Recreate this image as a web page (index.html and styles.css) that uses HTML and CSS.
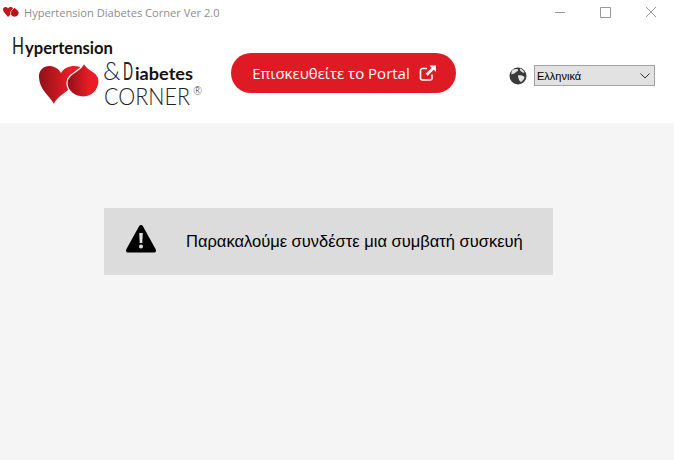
FILE: index.html
```html
<!DOCTYPE html>
<html>
<head>
    <meta charset="utf-8">
    <title>Hypertension Diabetes Corner Ver 2.0</title>
    <link rel="stylesheet" href="styles.css">
</head>

<body>
    <div class="titlebar">
        <svg class="app-icon" width="16" height="10" viewBox="0 0 16 10">
            <path d="M5 10C3 7 0 5 0 2.500 0 1 1 0 2.500 0 3.500 0 4.500.5 5 1.500 5.800.5 6.500 0 7.500 0 8.500 0 9.500.5 10 1L9 6z" fill="#c4161c"/>
            <path d="M11.500 0C11 2 7.500 3 7.500 6c0 2.500 2 4 4 4 2.500 0 4.500-2 4.500-4.500C16 3 12 2 11.500 0z" fill="#b5141b" stroke="#fff" stroke-width=".7"/>
        </svg>
        <span class="app-title">Hypertension Diabetes Corner Ver 2.0</span>
        <div class="window-controls">
            <svg class="win-btn" width="46" height="24" viewBox="0 0 46 24"><path d="M19 12.500h10" stroke="#999" fill="none"/></svg>
            <svg class="win-btn" width="46" height="24" viewBox="0 0 46 24"><path d="M18.500 7.500h10v10h-10z" stroke="#999" fill="none"/></svg>
            <svg class="win-btn" width="46" height="24" viewBox="0 0 46 24"><path d="M18 7l10 10M28 7L18 17" stroke="#999" fill="none"/></svg>
        </div>
    </div>

    <div class="header">
        <svg class="logo" width="200" height="82" viewBox="0 0 200 82">
            <defs>
                <linearGradient id="red" x1="0" x2="1" y1="0" y2="0">
                    <stop offset="0" stop-color="#8f1117"/>
                    <stop offset="0.7" stop-color="#ea1c26"/>
                </linearGradient>
            </defs>
            <text x="4" y="24" class="logo-cap" font-size="24" textLength="12" lengthAdjust="spacingAndGlyphs">H</text>
            <text x="17" y="24" class="logo-bold" font-size="17" textLength="88" lengthAdjust="spacingAndGlyphs">ypertension</text>
            <path d="M46 74C42 66 31 60 31 46c0-6 5-10 10-10 5 0 9 2 12 7 3-5 8-7 13-7 4 0 7 1 9 3L60 60c-8 6-13 10-14 14z" fill="url(#red)"/>
            <path d="M76 33c-2 6-10 9-14 13-2 2-3 4-3 7 0 8 8 14 16 14 9 0 16-7 16-16 0-7-7-10-11-13-2-2-3-3-4-5z" fill="url(#red)" stroke="#fff" stroke-width="1.200"/>
            <text x="95" y="50" class="logo-thin" font-size="25">&amp;</text>
            <text x="115" y="50" class="logo-cap" font-size="25" textLength="10" lengthAdjust="spacingAndGlyphs">D</text>
            <text x="127" y="50" class="logo-bold" font-size="17" textLength="58" lengthAdjust="spacingAndGlyphs">iabetes</text>
            <text x="96" y="75" class="logo-thin" font-size="24" textLength="86" lengthAdjust="spacingAndGlyphs">CORNER</text>
            <text x="185" y="65" class="logo-thin" font-size="11">®</text>
        </svg>

        <button type="button" class="portal-button">
            <span>Επισκευθείτε το Portal</span>
            <svg width="18" height="16" viewBox="0 0 18 16">
                <path d="M8 3.500H3.500a2 2 0 0 0-2 2V13a2 2 0 0 0 2 2H11a2 2 0 0 0 2-2V9.500" fill="none" stroke="#fff" stroke-width="1.600"/>
                <path d="M10.500 0.500H17V7l-2.300-2.300-6 6-2-2 6-6z" fill="#fff"/>
            </svg>
        </button>

        <div class="language">
            <svg width="18" height="18" viewBox="0 0 18 18">
                <circle cx="9" cy="9" r="8.500" fill="#3a3a3a"/>
                <path d="M4 2.500c2-.5 4-.8 5 0 .5 1.500-1.500 2-2.500 3-1 1.500-3 1-4 2C2 5.500 2.800 3.500 4 2.500zM11 1.500c2 .5 3.500 2 4.500 4-1.500.5-3-.5-4-1.500-.5-1-.8-1.700-.5-2.500zM9 8.500c2-.5 5 0 6.500 1.500-.5 2.500-2 4-3.500 5-1.500-1-2.500-2.500-2.500-4-.5-1-.5-1.800-.5-2.500z" fill="#e4e4e4"/>
            </svg>
            <div class="select-box">
                <span>Ελληνικά</span>
                <svg width="10" height="6" viewBox="0 0 10 6"><path d="M.5.500L5 5 9.500.5" fill="none" stroke="#333"/></svg>
            </div>
        </div>
    </div>

    <div class="main">
        <div class="alert">
            <svg class="alert-icon" width="32" height="28" viewBox="0 0 32 28">
                <path d="M16 0c.8 0 1.400.4 1.800 1.100l13 23.500c.7 1.300-.1 2.900-1.500 2.900H2.700c-1.400 0-2.200-1.600-1.500-2.900l13-23.500C14.600.4 15.200 0 16 0z" fill="#000"/>
                <path d="M14.200 8h3.600l-.5 10h-2.600z" fill="#dcdcdc"/>
                <circle cx="16" cy="21.500" r="2" fill="#dcdcdc"/>
            </svg>
            <span>Παρακαλούμε συνδέστε μια συμβατή συσκευή</span>
        </div>
    </div>
</body>
</html>
```

FILE: styles.css
```css
html, body {
    height: 100%;
}
body {
    font-family: "Open Sans", sans-serif;
    display: flex;
    flex-direction: column;
    margin: 0;
    background-color: #f5f5f5;
    overflow: hidden;
}
.titlebar {
    display: flex;
    align-items: center;
    height: 24px;
    padding-left: 3px;
    background-color: #fff;
}
.app-icon {
    margin-right: 5px;
}
.app-title {
    font-size: 11.1px;
    color: #8d8d8d;
}
.window-controls {
    display: flex;
    margin-left: auto;
}
.header {
    display: flex;
    align-items: flex-start;
    height: 99px;
    background-color: #fff;
}
.logo {
    margin: 6px 0 0 8px;
}
.logo-thin {
    font-family: "Lato", sans-serif;
    font-weight: 300;
    fill: #222;
}
.logo-cap {
    font-family: "Lato", sans-serif;
    font-weight: 400;
    fill: #222;
}
.logo-bold {
    font-family: "Lato", sans-serif;
    font-weight: 700;
    fill: #111;
}
.portal-button {
    display: flex;
    align-items: center;
    justify-content: center;
    gap: 9px;
    box-sizing: border-box;
    width: 225px;
    height: 40px;
    margin: 29px 0 0 23px;
    padding: 0 0 0 2px;
    border: none;
    border-radius: 20px;
    background-color: #de1b24;
    color: #fff;
    font-family: "Open Sans", sans-serif;
    font-size: 15px;
}
.language {
    display: flex;
    align-items: center;
    gap: 7px;
    margin: 41px 0 0 53px;
}
.select-box {
    display: flex;
    align-items: center;
    justify-content: space-between;
    box-sizing: border-box;
    width: 121px;
    height: 21px;
    padding: 0 4px 0 2px;
    border: 1px solid #a3a3a3;
    background-color: #e2e2e2;
    font-family: "Liberation Sans", sans-serif;
    font-size: 11px;
    color: #000;
}
.main {
    flex-grow: 1;
    padding: 85px 0 0 104px;
}
.alert {
    display: flex;
    align-items: center;
    gap: 29px;
    box-sizing: border-box;
    width: 449px;
    height: 67px;
    padding-left: 21px;
    background-color: #dcdcdc;
    font-family: "Liberation Sans", sans-serif;
    font-size: 16.5px;
    color: #000;
}
.alert-icon {
    margin-bottom: 5px;
}
```
